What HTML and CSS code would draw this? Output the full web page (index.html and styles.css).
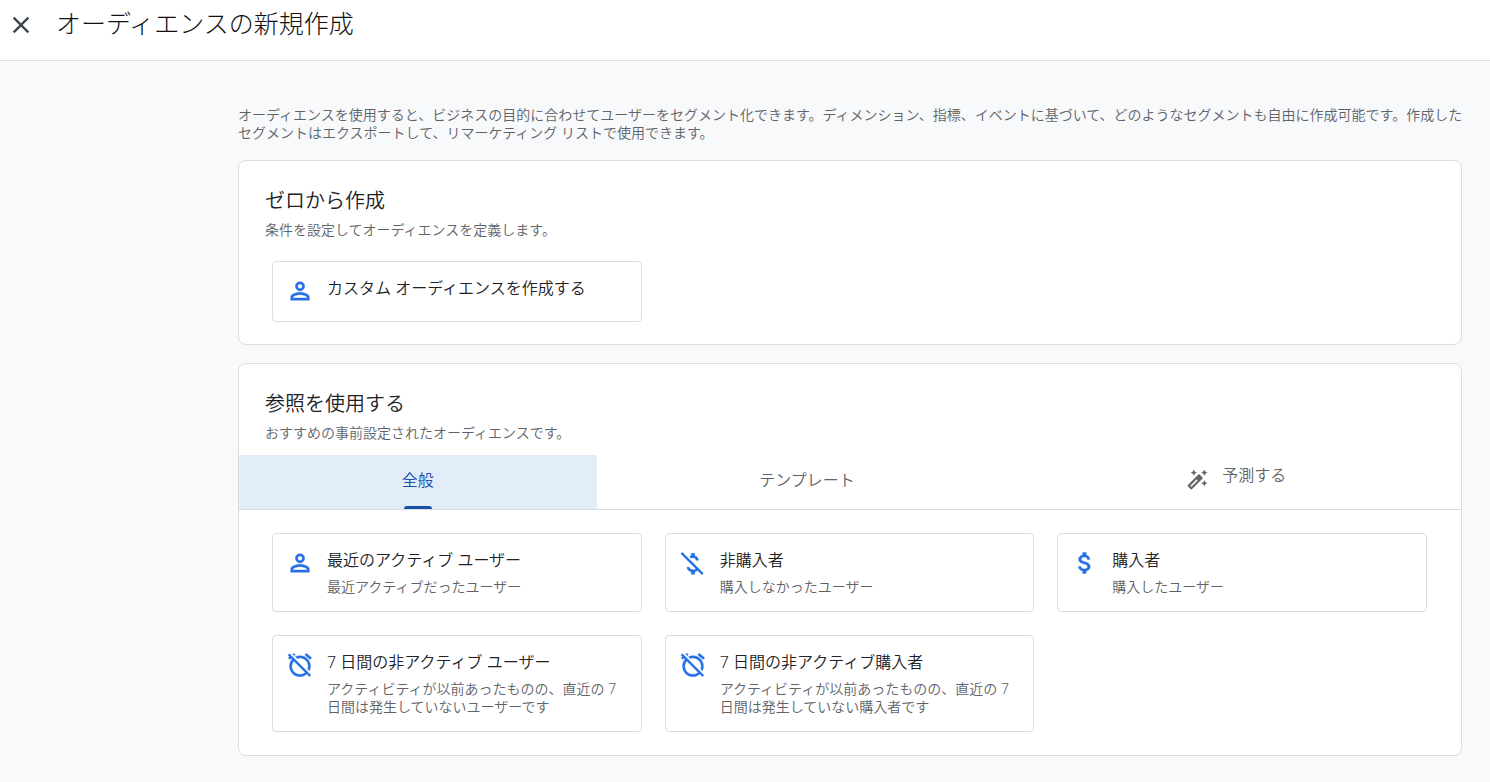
FILE: index.html
```html
<!DOCTYPE html>
<html lang="ja">
<head>
<meta charset="utf-8">
<title>オーディエンスの新規作成</title>
<link rel="stylesheet" href="styles.css">
</head>
<body>
<svg class="defs" aria-hidden="true">
  <symbol id="person" viewBox="0 0 24 24"><path d="M12 6a2 2 0 1 1 0 4 2 2 0 0 1 0-4m0 9.200c2.700 0 5.800 1.290 6 2v.800H6v-.800c.200-.710 3.300-2 6-2M12 4C9.790 4 8 5.790 8 8s1.790 4 4 4 4-1.790 4-4-1.790-4-4-4zm0 9c-2.670 0-8 1.340-8 4v3h16v-3c0-2.660-5.330-4-8-4z"/></symbol>
  <symbol id="dollar" viewBox="0 0 24 24"><path d="M11.800 10.900c-2.270-.590-3-1.200-3-2.150 0-1.090 1.010-1.850 2.700-1.850 1.780 0 2.440.850 2.500 2.100h2.210c-.070-1.720-1.120-3.300-3.210-3.810V3h-3v2.160c-1.940.420-3.500 1.680-3.500 3.610 0 2.310 1.910 3.460 4.700 4.130 2.500.600 3 1.480 3 2.410 0 .690-.490 1.790-2.700 1.790-2.060 0-2.870-.920-2.980-2.100h-2.200c.120 2.190 1.760 3.420 3.680 3.830V21h3v-2.150c1.950-.370 3.500-1.500 3.500-3.550 0-2.840-2.430-3.810-4.700-4.400z"/></symbol>
  <symbol id="dollar-off" viewBox="0 0 24 24"><g transform="translate(-.5 .7)"><path d="M12.500 6.900c1.780 0 2.440.850 2.500 2.100h2.210c-.070-1.720-1.120-3.300-3.210-3.810V3h-3v2.160c-.530.120-1.030.300-1.480.540l1.470 1.470c.410-.170.910-.270 1.510-.270zM3.300 2.030 2.030 3.300l12.890 12.890c-.340.480-1.050.910-2.420.910-2.060 0-2.870-.920-2.980-2.100h-2.200c.120 2.190 1.760 3.420 3.680 3.830V21h3v-2.150c.960-.180 1.820-.550 2.450-1.120l3.720 3.720 1.270-1.270z"/></g></symbol>
  <symbol id="alarm-off" viewBox="0 0 24 24"><path d="M12 6c3.870 0 7 3.130 7 7 0 .840-.160 1.650-.430 2.400l1.520 1.520c.580-1.190.910-2.510.910-3.920 0-4.970-4.030-9-9-9-1.410 0-2.730.330-3.920.910L9.600 6.430C10.350 6.160 11.160 6 12 6zm10-.280l-4.600-3.860-1.290 1.530 4.600 3.860L22 5.720zM2.920 2.290L1.650 3.570 2.980 4.900l-1.110.930 1.420 1.420 1.110-.940.800.800C3.830 8.690 3 10.750 3 13c0 4.970 4.020 9 9 9 2.250 0 4.310-.830 5.890-2.200l2.200 2.200 1.270-1.270L3.890 3.270l-.970-.980zm13.550 16.100C15.260 19.390 13.700 20 12 20c-3.870 0-7-3.130-7-7 0-1.700.610-3.260 1.610-4.470l9.860 9.860zM8.020 3.280L6.600 1.860l-.860.710 1.420 1.420.860-.710z"/></symbol>
</svg>

<header class="topbar">
  <button class="close" type="button" aria-label="閉じる">
    <svg class="icon" viewBox="0 0 24 24"><path d="M19 6.410 17.590 5 12 10.590 6.410 5 5 6.410 10.590 12 5 17.590 6.410 19 12 13.410 17.590 19 19 17.590 13.410 12z"/></svg>
  </button>
  <h1 class="page-title">オーディエンスの新規作成</h1>
</header>

<main class="content">
  <p class="intro">オーディエンスを使用すると、ビジネスの目的に合わせてユーザーをセグメント化できます。ディメンション、指標、イベントに基づいて、どのようなセグメントも自由に作成可能です。作成したセグメントはエクスポートして、リマーケティング リストで使用できます。</p>

  <section class="card">
    <h2 class="card-title">ゼロから作成</h2>
    <p class="card-sub">条件を設定してオーディエンスを定義します。</p>
    <div class="options">
      <button class="option" type="button">
        <svg class="icon"><use href="#person"/></svg>
        <span class="option-text"><span class="option-name">カスタム オーディエンスを作成する</span></span>
      </button>
    </div>
  </section>

  <section class="card">
    <h2 class="card-title">参照を使用する</h2>
    <p class="card-sub">おすすめの事前設定されたオーディエンスです。</p>
    <div class="tabs" role="tablist">
      <button class="tab tab-active" type="button" role="tab" aria-selected="true">全般</button>
      <button class="tab" type="button" role="tab" aria-selected="false">テンプレート</button>
      <button class="tab tab-with-icon" type="button" role="tab" aria-selected="false">
        <svg class="tab-icon" viewBox="0 0 24 24"><path d="M20 7l.940-2.060L23 4l-2.060-.940L20 1l-.940 2.060L17 4l2.060.940zM8.500 7l.940-2.060L11.500 4l-2.060-.940L8.500 1l-.940 2.060L5.500 4l2.060.940zM20 12.500l-.940 2.060-2.060.940 2.060.940.940 2.060.940-2.060L23 15.500l-2.060-.940zM17.710 9.120l-2.830-2.830C14.680 6.100 14.430 6 14.170 6c-.260 0-.510.100-.710.290L2.290 17.460c-.390.390-.390 1.020 0 1.410l2.830 2.830c.200.200.450.300.710.300s.510-.100.710-.290l11.170-11.170c.390-.390.390-1.030 0-1.420zM5.830 19.590l-1.420-1.420L11.500 11.080l1.420 1.420z"/></svg>
        <span class="tab-label">予測する</span>
      </button>
    </div>
    <div class="options">
      <button class="option" type="button">
        <svg class="icon"><use href="#person"/></svg>
        <span class="option-text"><span class="option-name">最近のアクティブ ユーザー</span><span class="option-note">最近アクティブだったユーザー</span></span>
      </button>
      <button class="option" type="button">
        <svg class="icon"><use href="#dollar-off"/></svg>
        <span class="option-text"><span class="option-name">非購入者</span><span class="option-note">購入しなかったユーザー</span></span>
      </button>
      <button class="option" type="button">
        <svg class="icon"><use href="#dollar"/></svg>
        <span class="option-text"><span class="option-name">購入者</span><span class="option-note">購入したユーザー</span></span>
      </button>
      <button class="option" type="button">
        <svg class="icon"><use href="#alarm-off"/></svg>
        <span class="option-text"><span class="option-name">7 日間の非アクティブ ユーザー</span><span class="option-note">アクティビティが以前あったものの、直近の 7 日間は発生していないユーザーです</span></span>
      </button>
      <button class="option" type="button">
        <svg class="icon"><use href="#alarm-off"/></svg>
        <span class="option-text"><span class="option-name">7 日間の非アクティブ購入者</span><span class="option-note">アクティビティが以前あったものの、直近の 7 日間は発生していない購入者です</span></span>
      </button>
    </div>
  </section>
</main>
</body>
</html>
```

FILE: styles.css
```css
* {
  box-sizing: border-box;
}

body {
  margin: 0;
  background: #f8f9fb;
  color: #202124;
  font-family: "Noto Sans", "Noto Sans CJK JP", sans-serif;
  font-size: 14px;
  font-weight: 350;
  line-height: 18px;
}

button {
  margin: 0;
  padding: 0;
  border: 0;
  background: none;
  color: inherit;
  font: inherit;
  cursor: pointer;
}

h1,
h2,
p {
  margin: 0;
  font-weight: inherit;
}

.defs {
  display: none;
}

.icon {
  display: block;
  flex: none;
  width: 28px;
  height: 28px;
  fill: currentColor;
}

.topbar {
  display: flex;
  align-items: flex-start;
  gap: 21px;
  padding: 5px 7px 19px;
  border-bottom: 1px solid #dadce0;
  background: #fff;
}

.close {
  padding-top: 6px;
  color: #3c4650;
}

.page-title {
  color: #111;
  font-size: 25px;
  font-weight: 300;
  line-height: 36px;
}

.content {
  display: flex;
  flex-direction: column;
  gap: 18px;
  padding: 45px 28px 26px 238px;
}

.intro {
  margin-right: -12px;
  color: #5f6368;
}

.card {
  padding-top: 28px;
  border: 1px solid #dadce0;
  border-radius: 8px;
  background: #fff;
}

.card-title {
  padding: 0 26px;
  font-size: 20px;
  line-height: 24px;
}

.card-sub {
  padding: 8px 26px 0;
  color: #5f6368;
}

.options {
  display: grid;
  grid-template-columns: repeat(3, 1fr);
  gap: 23px;
  padding: 22px 34px 22px 33px;
}

.tabs + .options {
  padding-top: 23px;
  padding-bottom: 23px;
}

.option {
  display: flex;
  align-items: flex-start;
  gap: 13px;
  min-height: 61px;
  padding: 15px 14px 15px 13px;
  border: 1px solid #dadce0;
  border-radius: 4px;
  background: #fff;
  text-align: left;
}

.option .icon {
  color: #2370e6;
  stroke: currentColor;
  stroke-width: 0.3;
}

.option-text {
  display: flex;
  flex-direction: column;
  gap: 7px;
}

.option-name {
  font-size: 16px;
  line-height: 22px;
}

.option-note {
  color: #5f6368;
}

.tabs {
  display: flex;
  margin-top: 13px;
  border-bottom: 1px solid #dadce0;
}

.tab {
  position: relative;
  display: flex;
  flex: 1 1 auto;
  align-items: center;
  justify-content: center;
  gap: 14px;
  height: 54px;
  padding-bottom: 4px;
  color: #5f6368;
  font-size: 16px;
  line-height: 22px;
}

.tab-with-icon {
  padding-right: 12px;
  padding-left: 6px;
}

.tab-active {
  background: #e3edf9;
  color: #174ea6;
}

.tab-active::after {
  position: absolute;
  bottom: 0;
  left: 50%;
  width: 28px;
  height: 3px;
  margin-left: -14px;
  border-radius: 3px 3px 0 0;
  background: #174ea6;
  content: "";
}

.tab-icon {
  width: 22px;
  height: 22px;
  fill: currentColor;
  stroke: currentColor;
  stroke-width: 0.4;
}

.tab-label {
  padding-bottom: 10px;
}
```
